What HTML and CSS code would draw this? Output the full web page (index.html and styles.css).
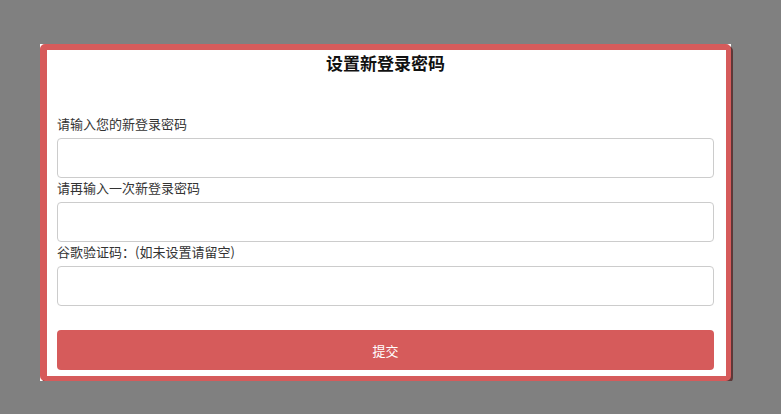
FILE: index.html
```html
<!DOCTYPE html>
<html lang="zh-CN">
<head>
<meta charset="utf-8">
<title>设置新登录密码</title>
<link rel="stylesheet" href="styles.css">
</head>
<body>
<div class="modal">
  <div class="panel">
    <h2 class="title">设置新登录密码</h2>
    <form class="form">
      <label class="label">请输入您的新登录密码</label>
      <input class="input" type="password">
      <label class="label">请再输入一次新登录密码</label>
      <input class="input" type="password">
      <label class="label">谷歌验证码：(如未设置请留空)</label>
      <input class="input" type="text">
      <button class="submit" type="button">提交</button>
    </form>
  </div>
</div>
</body>
</html>
```

FILE: styles.css
```css
html, body {
  margin: 0;
  padding: 0;
  background: #808080;
  font-family: "Noto Sans CJK SC", "Noto Sans", sans-serif;
}

.modal {
  margin: 44px 0 0 40px;
  width: 691px;
  height: 337px;
  background: #fff;
}

.panel {
  box-sizing: border-box;
  height: 100%;
  border-style: solid;
  border-color: #d65b5b;
  border-width: 6px 5px 5px 7px;
  border-radius: 5px;
  background: #fff;
  box-shadow: 2px 2px 0 #5e3838;
  padding: 0 12px 0 10px;
}

.title {
  margin: 0;
  height: 26px;
  line-height: 26px;
  font-size: 17px;
  font-weight: bold;
  color: #111;
  text-align: center;
}

.form {
  display: flex;
  flex-direction: column;
  margin-top: 38px;
}

.label {
  display: block;
  height: 20px;
  line-height: 20px;
  margin-bottom: 4px;
  font-size: 13px;
  color: #333;
}

.input {
  box-sizing: border-box;
  display: block;
  width: 100%;
  height: 40px;
  margin: 0;
  border: 1px solid #cccccc;
  border-radius: 4px;
  background: #fff;
  outline: none;
}

.submit {
  margin-top: 24px;
  height: 40px;
  width: 100%;
  border: none;
  border-radius: 4px;
  background: #d65b5b;
  color: #fff;
  font-family: "Noto Sans CJK SC", "Noto Sans", sans-serif;
  font-size: 13px;
}
```
